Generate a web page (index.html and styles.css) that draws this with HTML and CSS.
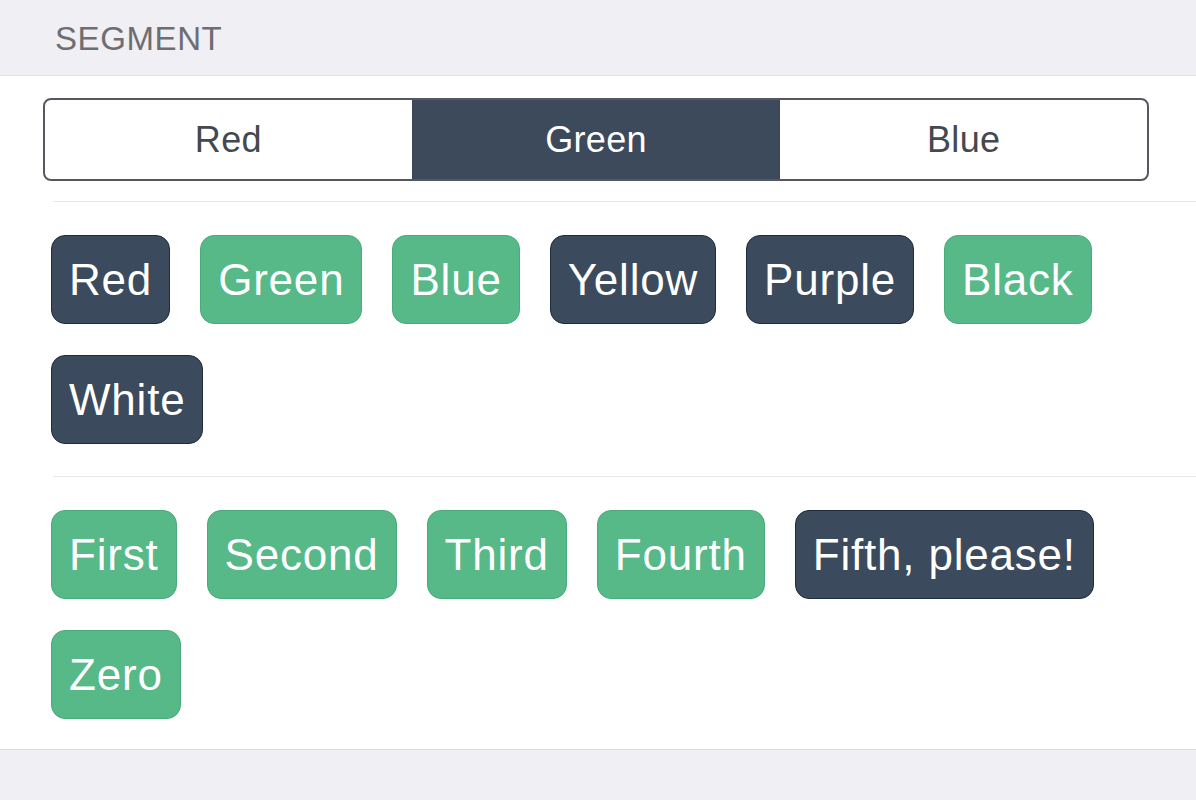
FILE: index.html
```html
<!DOCTYPE html>
<html>
<head>
<meta charset="utf-8">
<link rel="stylesheet" href="styles.css">
</head>
<body>
<div class="header">SEGMENT</div>
<div class="section">
  <div class="cell segment-cell">
    <div class="segment">
      <div class="seg">Red</div>
      <div class="seg active">Green</div>
      <div class="seg">Blue</div>
    </div>
  </div>
  <div class="sep"></div>
  <div class="cell tag-cell first-tags">
    <span class="tag dark">Red</span>
    <span class="tag green">Green</span>
    <span class="tag green">Blue</span>
    <span class="tag dark">Yellow</span>
    <span class="tag dark">Purple</span>
    <span class="tag green">Black</span>
    <span class="tag dark">White</span>
  </div>
  <div class="sep"></div>
  <div class="cell tag-cell last-tags">
    <span class="tag green">First</span>
    <span class="tag green">Second</span>
    <span class="tag green">Third</span>
    <span class="tag green">Fourth</span>
    <span class="tag dark">Fifth, please!</span>
    <span class="tag green">Zero</span>
  </div>
</div>
</body>
</html>
```
FILE: styles.css
```css
* { box-sizing: border-box; }
html, body {
  margin: 0;
  padding: 0;
  background: #efeff4;
  font-family: "Liberation Sans", Arial, sans-serif;
}
.header {
  height: 75px;
  padding: 19px 0 0 55px;
  font-size: 33px;
  line-height: 40px;
  letter-spacing: 0.6px;
  color: #6d6d72;
}
.section {
  background: #ffffff;
  border-top: 1px solid #e2e2e6;
  border-bottom: 1px solid #dcdce0;
}
.segment-cell {
  padding: 22px 47px 20px 43px;
}
.segment {
  display: flex;
  height: 83px;
  border: 2px solid #55595f;
  border-radius: 8px;
  overflow: hidden;
}
.seg {
  flex: 1;
  display: flex;
  align-items: center;
  justify-content: center;
  font-size: 36px;
  color: #44484f;
  letter-spacing: 0.3px;
}
.seg + .seg { border-left: 1px solid #3a4555; }
.seg.active {
  background: #3d4a5c;
  color: #ffffff;
}
.sep {
  height: 1px;
  margin-left: 53px;
  background: #e6e6e9;
}
.tag-cell {
  display: flex;
  flex-wrap: wrap;
  gap: 31px 30px;
  padding-left: 51px;
  padding-right: 40px;
}
.first-tags { padding-top: 33px; padding-bottom: 32px; }
.last-tags { padding-top: 33px; padding-bottom: 30px; }
.tag {
  display: inline-block;
  height: 89px;
  line-height: 87px;
  padding: 0 17px;
  border-radius: 14px;
  font-size: 44px;
  letter-spacing: 0.8px;
  color: #ffffff;
  border: 1px solid transparent;
}
.tag.dark {
  background: #3b4a5c;
  border-color: #1f2c3c;
}
.tag.green {
  background: #56b987;
  border-color: #4aaa79;
}
```
